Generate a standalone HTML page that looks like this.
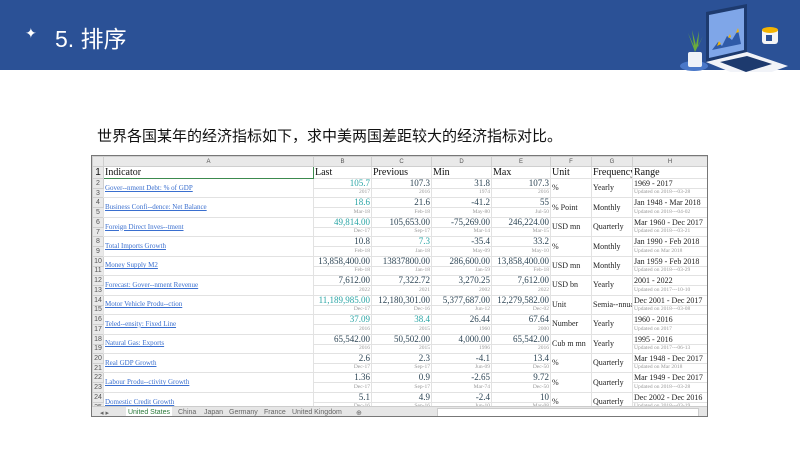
<!DOCTYPE html>
<html><head><meta charset="utf-8"><style>
*{margin:0;padding:0;box-sizing:border-box}
body{width:800px;height:450px;background:#fff;position:relative;overflow:hidden;font-family:"Liberation Serif","Noto Serif CJK SC",serif}
.hdr{position:absolute;left:0;top:0;width:800px;height:70px;background:#2b5196}
.title{position:absolute;left:55px;top:20px;color:#fff;font:23px "Liberation Sans","Noto Sans CJK SC",sans-serif}
.star{position:absolute;left:25px;top:26px;color:#fff;font:14px "DejaVu Sans",sans-serif}
.q{position:absolute;left:97px;top:125px;font:15px "Liberation Sans","Noto Sans CJK SC",sans-serif;color:#111}
.sheet{position:absolute;left:91px;top:155px;width:617px;height:262px;border:1px solid #777;overflow:hidden;background:#fff}
table{border-collapse:collapse;table-layout:fixed;position:absolute;left:0;top:0;width:615px}
td{border:1px solid #e2e2e2;overflow:hidden;white-space:nowrap;padding:0 1px;line-height:1}
tr.ch td{background:#e9e9e9;height:10px;font:6px "Liberation Sans",sans-serif;color:#555;text-align:center;border-color:#cfcfcf}
td.rn{background:#e9e9e9;color:#555;font:7px "Liberation Sans",sans-serif;text-align:center;border-color:#cfcfcf;padding:0}
tr.h1 td{height:12px;font-size:10px;color:#111}
tr.s td{height:9.45px}
.v{font-size:9px;color:#2d4555;text-align:right;vertical-align:bottom}
.t{color:#2aa5a5}
.d{font-size:5.5px;color:#999;text-align:right;vertical-align:middle}
.l{font-size:7px;color:#3a6fcf;text-decoration:underline;vertical-align:middle}
.u{font-size:8px;color:#222;vertical-align:middle}
.f{font-size:8px;color:#222;vertical-align:middle}
.r{font-size:8px;color:#222;vertical-align:bottom}
.up{font-size:5.5px;color:#999;vertical-align:middle}
.tabs{position:absolute;left:0;top:250px;width:617px;height:12px;background:#e6e6e6;border-top:1px solid #ccc;font:7px "Liberation Sans",sans-serif;color:#666}
.tabs span{position:absolute;top:2px}
</style></head><body>
<div class="hdr"></div>
<div class="star">✦</div>
<div class="title">5. 排序</div>
<svg style="position:absolute;left:680px;top:0" width="120" height="72" viewBox="0 0 120 72">
<ellipse cx="14" cy="66" rx="14" ry="5" fill="#4a78c8"/>
<rect x="8" y="52" width="14" height="15" rx="2" fill="#eef2f8"/>
<path d="M15 52 L8 33 L14 46 L12 30 L16 45 L19 31 L18 47 L23 36 Z" fill="#6aab3c"/>
<path d="M26 62 L26 12 L67 4 L67 52 Z" fill="#1d3a6e"/>
<path d="M29 58 L29 15 L64 8 L64 50 Z" fill="#7fa6e8"/>
<path d="M32 50 L38 42 L42 46 L47 36 L52 40 L58 30 L61 44 L32 50Z" fill="#2f5aa8"/>
<path d="M37 46 l2 -5 l2 3z M48 38 l2 -4 l1 3z M56 33 l2 -5 l1 4z" fill="#f4b400"/>
<path d="M26 62 L67 52 L108 66 L70 80 Z" fill="#f1f3f8"/>
<path d="M40 62 L67 56 L92 64 L66 72 Z" fill="#1d3a6e"/>
<rect x="82" y="28" width="16" height="16" rx="3" fill="#f5f5f5"/>
<ellipse cx="90" cy="30" rx="8" ry="3" fill="#f4b400"/>
<rect x="86" y="35" width="6" height="6" fill="#2b5196"/>
</svg>
<div class="q">世界各国某年的经济指标如下，求中美两国差距较大的经济指标对比。</div>
<div class="sheet">
<table>
<colgroup><col style="width:11px"><col style="width:210px"><col style="width:58px"><col style="width:60px"><col style="width:60px"><col style="width:59px"><col style="width:41px"><col style="width:41px"><col style="width:75px"></colgroup>
<tr class="ch"><td></td><td>A</td><td>B</td><td>C</td><td>D</td><td>E</td><td>F</td><td>G</td><td>H</td></tr>
<tr class="h1"><td class="rn">1</td><td style="border:1px solid #3c8a4e">Indicator</td><td>Last</td><td>Previous</td><td>Min</td><td>Max</td><td>Unit</td><td>Frequency</td><td>Range</td></tr>
<tr class="s"><td class="rn">2</td><td class="l" rowspan="2">Gover--nment Debt: % of GDP</td><td class="v t">105.7</td><td class="v">107.3</td><td class="v">31.8</td><td class="v">107.3</td><td class="u" rowspan="2">%</td><td class="f" rowspan="2">Yearly</td><td class="r">1969 - 2017</td></tr>
<tr class="s"><td class="rn">3</td><td class="d">2017</td><td class="d">2016</td><td class="d">1974</td><td class="d">2016</td><td class="up">Updated on 2018---03-28</td></tr>
<tr class="s"><td class="rn">4</td><td class="l" rowspan="2">Business Confi--dence: Net Balance</td><td class="v t">18.6</td><td class="v">21.6</td><td class="v">-41.2</td><td class="v">55</td><td class="u" rowspan="2">% Point</td><td class="f" rowspan="2">Monthly</td><td class="r">Jan 1948 - Mar 2018</td></tr>
<tr class="s"><td class="rn">5</td><td class="d">Mar-18</td><td class="d">Feb-18</td><td class="d">May-80</td><td class="d">Jul-50</td><td class="up">Updated on 2018---04-02</td></tr>
<tr class="s"><td class="rn">6</td><td class="l" rowspan="2">Foreign Direct Inves--tment</td><td class="v t">49,814.00</td><td class="v">105,653.00</td><td class="v">-75,269.00</td><td class="v">246,224.00</td><td class="u" rowspan="2">USD mn</td><td class="f" rowspan="2">Quarterly</td><td class="r">Mar 1960 - Dec 2017</td></tr>
<tr class="s"><td class="rn">7</td><td class="d">Dec-17</td><td class="d">Sep-17</td><td class="d">Mar-14</td><td class="d">Mar-15</td><td class="up">Updated on 2018---03-21</td></tr>
<tr class="s"><td class="rn">8</td><td class="l" rowspan="2">Total Imports Growth</td><td class="v">10.8</td><td class="v t">7.3</td><td class="v">-35.4</td><td class="v">33.2</td><td class="u" rowspan="2">%</td><td class="f" rowspan="2">Monthly</td><td class="r">Jan 1990 - Feb 2018</td></tr>
<tr class="s"><td class="rn">9</td><td class="d">Feb-18</td><td class="d">Jan-18</td><td class="d">May-09</td><td class="d">May-10</td><td class="up">Updated on Mar 2018</td></tr>
<tr class="s"><td class="rn">10</td><td class="l" rowspan="2">Money Supply M2</td><td class="v">13,858,400.00</td><td class="v">13837800.00</td><td class="v">286,600.00</td><td class="v">13,858,400.00</td><td class="u" rowspan="2">USD mn</td><td class="f" rowspan="2">Monthly</td><td class="r">Jan 1959 - Feb 2018</td></tr>
<tr class="s"><td class="rn">11</td><td class="d">Feb-18</td><td class="d">Jan-18</td><td class="d">Jan-59</td><td class="d">Feb-18</td><td class="up">Updated on 2018---03-29</td></tr>
<tr class="s"><td class="rn">12</td><td class="l" rowspan="2">Forecast: Gover--nment Revenue</td><td class="v">7,612.00</td><td class="v">7,322.72</td><td class="v">3,270.25</td><td class="v">7,612.00</td><td class="u" rowspan="2">USD bn</td><td class="f" rowspan="2">Yearly</td><td class="r">2001 - 2022</td></tr>
<tr class="s"><td class="rn">13</td><td class="d">2022</td><td class="d">2021</td><td class="d">2002</td><td class="d">2022</td><td class="up">Updated on 2017---10-10</td></tr>
<tr class="s"><td class="rn">14</td><td class="l" rowspan="2">Motor Vehicle Produ--ction</td><td class="v t">11,189,985.00</td><td class="v">12,180,301.00</td><td class="v">5,377,687.00</td><td class="v">12,279,582.00</td><td class="u" rowspan="2">Unit</td><td class="f" rowspan="2">Semia--nnual</td><td class="r">Dec 2001 - Dec 2017</td></tr>
<tr class="s"><td class="rn">15</td><td class="d">Dec-17</td><td class="d">Dec-16</td><td class="d">Jun-12</td><td class="d">Dec-02</td><td class="up">Updated on 2018---03-08</td></tr>
<tr class="s"><td class="rn">16</td><td class="l" rowspan="2">Teled--ensity: Fixed Line</td><td class="v t">37.09</td><td class="v t">38.4</td><td class="v">26.44</td><td class="v">67.64</td><td class="u" rowspan="2">Number</td><td class="f" rowspan="2">Yearly</td><td class="r">1960 - 2016</td></tr>
<tr class="s"><td class="rn">17</td><td class="d">2016</td><td class="d">2015</td><td class="d">1960</td><td class="d">2000</td><td class="up">Updated on 2017</td></tr>
<tr class="s"><td class="rn">18</td><td class="l" rowspan="2">Natural Gas: Exports</td><td class="v">65,542.00</td><td class="v">50,502.00</td><td class="v">4,000.00</td><td class="v">65,542.00</td><td class="u" rowspan="2">Cub m mn</td><td class="f" rowspan="2">Yearly</td><td class="r">1995 - 2016</td></tr>
<tr class="s"><td class="rn">19</td><td class="d">2016</td><td class="d">2015</td><td class="d">1996</td><td class="d">2016</td><td class="up">Updated on 2017---06-13</td></tr>
<tr class="s"><td class="rn">20</td><td class="l" rowspan="2">Real GDP Growth</td><td class="v">2.6</td><td class="v">2.3</td><td class="v">-4.1</td><td class="v">13.4</td><td class="u" rowspan="2">%</td><td class="f" rowspan="2">Quarterly</td><td class="r">Mar 1948 - Dec 2017</td></tr>
<tr class="s"><td class="rn">21</td><td class="d">Dec-17</td><td class="d">Sep-17</td><td class="d">Jun-09</td><td class="d">Dec-50</td><td class="up">Updated on Mar 2018</td></tr>
<tr class="s"><td class="rn">22</td><td class="l" rowspan="2">Labour Produ--ctivity Growth</td><td class="v">1.36</td><td class="v">0.9</td><td class="v">-2.65</td><td class="v">9.72</td><td class="u" rowspan="2">%</td><td class="f" rowspan="2">Quarterly</td><td class="r">Mar 1949 - Dec 2017</td></tr>
<tr class="s"><td class="rn">23</td><td class="d">Dec-17</td><td class="d">Sep-17</td><td class="d">Mar-74</td><td class="d">Dec-50</td><td class="up">Updated on 2018---03-28</td></tr>
<tr class="s"><td class="rn">24</td><td class="l" rowspan="2">Domestic Credit Growth</td><td class="v">5.1</td><td class="v">4.9</td><td class="v">-2.4</td><td class="v">10</td><td class="u" rowspan="2">%</td><td class="f" rowspan="2">Quarterly</td><td class="r">Dec 2002 - Dec 2016</td></tr>
<tr class="s"><td class="rn">25</td><td class="d">Dec-16</td><td class="d">Sep-16</td><td class="d">Jun-10</td><td class="d">Mar-08</td><td class="up">Updated on 2018---03-19</td></tr>
<tr class="s"><td class="rn">26</td><td></td><td class="v">146.0</td><td class="v">139.2</td><td class="v">76.6</td><td class="v">142</td><td></td><td></td><td class="r">1976 - 2016</td></tr>
</table>
<div class="tabs">
<span style="left:8px">◂ ▸</span>
<span style="left:34px;top:0;width:46px;height:11px;background:#fff;padding-top:2px;text-align:center;color:#2a7a3a;border-bottom:2px solid #2a7a3a">United States</span>
<span style="left:86px">China</span>
<span style="left:112px">Japan</span>
<span style="left:137px">Germany</span>
<span style="left:172px">France</span>
<span style="left:200px">United Kingdom</span>
<span style="left:264px">⊕</span>
<span style="left:345px;top:1px;width:262px;height:9px;background:#fff;border:1px solid #ccc"></span>
</div>
</div>
</body></html>
